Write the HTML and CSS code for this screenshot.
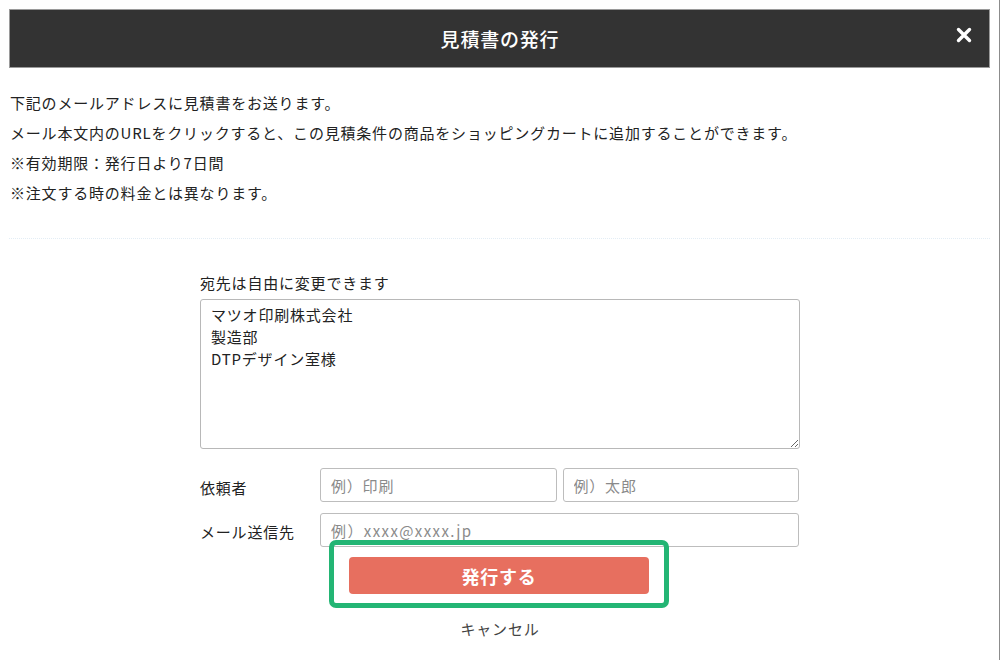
FILE: index.html
```html
<!DOCTYPE html>
<html lang="ja">
	<head>
		<meta charset="utf-8">
		<title>見積書の発行</title>
		<link rel="stylesheet" href="styles.css">
	</head>
	<body>
		<div class="modal">
			<header class="modal-head">
				<h1>見積書の発行</h1>
				<button class="close" type="button" aria-label="閉じる">
					<svg width="16" height="16" viewBox="0 0 16 16"><path d="M2.5 2.5 L13.5 13.5 M13.5 2.5 L2.5 13.5" stroke="#fff" stroke-width="3.4" stroke-linecap="round"/></svg>
				</button>
			</header>

			<div class="intro">
				<p>下記のメールアドレスに見積書をお送ります。</p>
				<p>メール本文内のURLをクリックすると、この見積条件の商品をショッピングカートに追加することができます。</p>
				<p>※有効期限：発行日より7日間</p>
				<p>※注文する時の料金とは異なります。</p>
			</div>

			<form class="quote-form">
				<label class="lead" for="addr">宛先は自由に変更できます</label>
				<textarea id="addr">マツオ印刷株式会社
製造部
DTPデザイン室様</textarea>

				<div class="row">
					<span class="row-label">依頼者</span>
					<div class="fields">
						<input type="text" placeholder="例）印刷">
						<input type="text" placeholder="例）太郎">
					</div>
				</div>
				<div class="row">
					<span class="row-label">メール送信先</span>
					<div class="fields">
						<input class="mail" type="text" placeholder="例）xxxx@xxxx.jp">
					</div>
				</div>

				<div class="submit-wrap">
					<button class="submit" type="button">発行する</button>
				</div>
				<a class="cancel">キャンセル</a>
			</form>
		</div>
	</body>
</html>
```

FILE: styles.css
```css
html, body {
	margin: 0;
	background: #fff;
}

body {
	font-family: "Noto Sans CJK JP", "Noto Sans", sans-serif;
	color: #222;
	font-size: 15px;
	letter-spacing: 0.8px;
}

.modal {
	width: 1000px;
	height: 660px;
	border-right: 1px solid #8c8c8c;
	box-sizing: border-box;
	padding: 9px 0 0 0;
	overflow: hidden;
}

.modal-head {
	margin-left: 9px;
	width: 981px;
	height: 59px;
	box-sizing: border-box;
	background: #333;
	border: 1px solid #9a9a9a;
	display: flex;
	align-items: center;
	justify-content: center;
	position: relative;
}

.modal-head h1 {
	margin: 0;
	color: #fff;
	font-size: 19px;
	font-weight: 500;
	letter-spacing: 0.8px;
	padding-left: 1px;
}

.close {
	position: absolute;
	right: 17px;
	top: 17px;
	background: none;
	border: 0;
	padding: 0;
	width: 16px;
	height: 16px;
	display: flex;
}

.intro {
	padding: 20px 10px 30px 1px;
	margin: 0 9px;
	border-bottom: 1px dotted #e3edf5;
}

.intro p {
	margin: 0;
	line-height: 30px;
}

.quote-form {
	width: 600px;
	margin: 0 0 0 200px;
	padding-top: 34px;
	display: flex;
	flex-direction: column;
}

.lead {
	line-height: 20px;
	margin-bottom: 6px;
}

textarea {
	font-family: inherit;
	font-size: 15px;
	letter-spacing: 0.8px;
	line-height: 22px;
	color: #222;
	height: 150px;
	box-sizing: border-box;
	padding: 4px 10px;
	border: 1px solid #b8b8b8;
	border-radius: 3px;
	resize: vertical;
	margin: 0;
}

.row {
	display: flex;
	align-items: center;
	margin-top: 19px;
}

.row + .row {
	margin-top: 11px;
}

.row-label {
	width: 120px;
	line-height: 20px;
	padding-top: 6px;
}

.row + .row .row-label {
	padding-top: 4px;
}

.fields {
	flex: 1;
	display: flex;
	gap: 6px;
	padding-right: 1px;
}

.fields input {
	flex: 1;
	min-width: 0;
	height: 34px;
	box-sizing: border-box;
	border: 1px solid #bdbdbd;
	border-radius: 3px;
	padding: 0 10px;
	font-family: inherit;
	font-size: 15px;
	letter-spacing: 0.8px;
	color: #222;
	margin: 0;
}

.fields input.mail {
	letter-spacing: 1.4px;
}

.fields input::placeholder {
	color: #8a8a8a;
}

.submit-wrap {
	position: relative;
	display: flex;
	margin-top: 10px;
}

/* highlight frame drawn over the button */
.submit-wrap::before {
	content: "";
	position: absolute;
	left: 129px;
	top: -17px;
	width: 340px;
	height: 68px;
	box-sizing: border-box;
	border: 5px solid #23b574;
	border-radius: 7px;
}

.submit {
	width: 300px;
	height: 37px;
	margin-left: 149px;
	background: #e76f5f;
	color: #fff;
	border: 0;
	border-radius: 4px;
	font-family: inherit;
	font-size: 18px;
	font-weight: 700;
	letter-spacing: 0.8px;
}

.cancel {
	margin-top: 25px;
	align-self: center;
	color: #444;
	line-height: 20px;
	letter-spacing: 0.8px;
}
```
